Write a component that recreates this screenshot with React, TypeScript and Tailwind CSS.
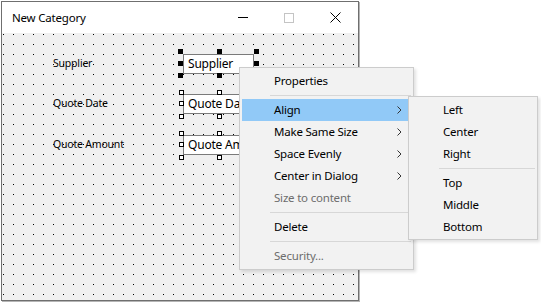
import {FunctionComponent} from 'react'

const font = {fontFamily: '"Noto Sans", "Open Sans", sans-serif'}

const Chevron: FunctionComponent = () => (
  <svg width="5" height="8" viewBox="0 0 5 8" className="block">
    <polyline points="0.5,0.5 4,4 0.5,7.5" fill="none" stroke="#333" strokeWidth="1" />
  </svg>
)

// selection grips around a control on the design surface
const Grips: FunctionComponent<{primary?: boolean}> = ({primary}) => {
  const cls = primary
    ? 'absolute w-[5px] h-[5px] bg-black'
    : 'absolute w-[5px] h-[5px] bg-white border border-black'
  const o = primary ? '-left-[5px]' : '-left-[4px]'
  return primary ? (
    <>
      <div className={cls + ' ' + o + ' -top-[5px]'} />
      <div className={cls + ' left-[34px] -top-[5px]'} />
      <div className={cls + ' left-[71px] -top-[5px]'} />
      <div className={cls + ' ' + o + ' top-[7px]'} />
      <div className={cls + ' left-[71px] top-[7px]'} />
      <div className={cls + ' ' + o + ' top-[19px]'} />
      <div className={cls + ' left-[34px] top-[19px]'} />
    </>
  ) : (
    <>
      <div className={cls + ' ' + o + ' -top-[4px]'} />
      <div className={cls + ' left-[34px] -top-[4px]'} />
      <div className={cls + ' ' + o + ' top-[7px]'} />
      <div className={cls + ' ' + o + ' top-[20px]'} />
      <div className={cls + ' left-[34px] top-[20px]'} />
    </>
  )
}

const Field: FunctionComponent<{label: string; value: string; primary?: boolean; className?: string}> = ({
  label,
  value,
  primary,
  className,
}) => (
  <div className={'flex items-center h-[20px] ' + (className ?? '')}>
    <div className="w-[130px] text-[10.5px] tracking-[-0.2px] text-black">{label}</div>
    <div className="relative w-[71px] h-[20px]">
      <div className="w-full h-full bg-white border border-[#7a7a7a] pl-[4px] text-[12px] tracking-[-0.2px] leading-[17px] text-black whitespace-nowrap">
        {value}
      </div>
      <Grips primary={primary} />
    </div>
  </div>
)

type Item = {label?: string; sub?: boolean; disabled?: boolean; active?: boolean; sep?: boolean}

const MenuList: FunctionComponent<{items: Item[]}> = ({items}) => (
  <div className="p-[2px] flex flex-col">
    {items.map((it, i) =>
      it.sep ? (
        <div key={i} className="h-[7px] flex items-center pl-[28px]">
          <div className="h-px w-full bg-[#d7d7d7]" />
        </div>
      ) : (
        <div
          key={i}
          className={
            'h-[22px] flex items-center justify-between pl-[32px] pr-[9px] text-[11.5px] tracking-[-0.2px] ' +
            (it.active ? 'bg-[#91c9f7] ' : '') +
            (it.disabled ? 'text-[#6d6d6d]' : 'text-black')
          }
        >
          <span>{it.label}</span>
          {it.sub && <Chevron />}
        </div>
      ),
    )}
  </div>
)

const mainItems: Item[] = [
  {label: 'Properties'},
  {sep: true},
  {label: 'Align', sub: true, active: true},
  {label: 'Make Same Size', sub: true},
  {label: 'Space Evenly', sub: true},
  {label: 'Center in Dialog', sub: true},
  {label: 'Size to content', disabled: true},
  {sep: true},
  {label: 'Delete'},
  {sep: true},
  {label: 'Security...', disabled: true},
]

const subItems: Item[] = [
  {label: 'Left'},
  {label: 'Center'},
  {label: 'Right'},
  {sep: true},
  {label: 'Top'},
  {label: 'Middle'},
  {label: 'Bottom'},
]

const App: FunctionComponent = () => {
  return (
    <div className="relative w-[541px] h-[304px] bg-white overflow-hidden pl-px pt-px" style={font}>
      <div className="w-[358px] h-[300px] border border-[#6f6f6f] shadow-[1px_1px_0_#b5b5b5] flex flex-col">
        <div className="h-[31px] bg-white flex items-center">
          <div className="pl-[10px] pt-px text-[11.5px] tracking-[-0.2px] text-black">New Category</div>
          <div className="ml-auto flex h-full">
            <div className="w-[46px] flex items-center justify-center">
              <svg width="10" height="1" className="block">
                <rect width="10" height="1" fill="#000" />
              </svg>
            </div>
            <div className="w-[46px] flex items-center justify-center">
              <svg width="10" height="10" className="block">
                <rect x="0.5" y="0.5" width="9" height="9" fill="none" stroke="#c4c4c4" />
              </svg>
            </div>
            <div className="w-[46px] flex items-center justify-center">
              <svg width="11" height="11" className="block">
                <path d="M0.5 0.5 L10.5 10.5 M10.5 0.5 L0.5 10.5" stroke="#000" strokeWidth="1" />
              </svg>
            </div>
          </div>
        </div>
        <div className="relative flex-1 bg-[#f0f0f0]">
          <svg className="absolute inset-0 w-full h-full" shapeRendering="crispEdges">
            <defs>
              <pattern id="dots" width="10" height="10" patternUnits="userSpaceOnUse">
                <rect x="1" y="1" width="1" height="1" fill="#000" />
              </pattern>
            </defs>
            <rect width="100%" height="100%" fill="url(#dots)" />
          </svg>
          <div className="relative flex flex-col pl-[51px] pt-[21px]">
            <Field label="Supplier" value="Supplier" primary />
            <Field label="Quote Date" value="Quote Date" className="mt-[20px]" />
            <Field label="Quote Amount" value="Quote Amount" className="mt-[21px]" />
          </div>
        </div>
      </div>

      <div className="absolute left-[239px] top-[67px] w-[175px] h-[203px] bg-[#f2f2f2] border border-[#cccccc] shadow-[2px_2px_3px_rgba(0,0,0,0.12)]">
        <MenuList items={mainItems} />
      </div>
      <div className="absolute left-[408px] top-[96px] w-[130px] h-[144px] bg-[#f2f2f2] border border-[#cccccc] shadow-[2px_2px_3px_rgba(0,0,0,0.12)]">
        <MenuList items={subItems} />
      </div>
    </div>
  )
}

export default App
